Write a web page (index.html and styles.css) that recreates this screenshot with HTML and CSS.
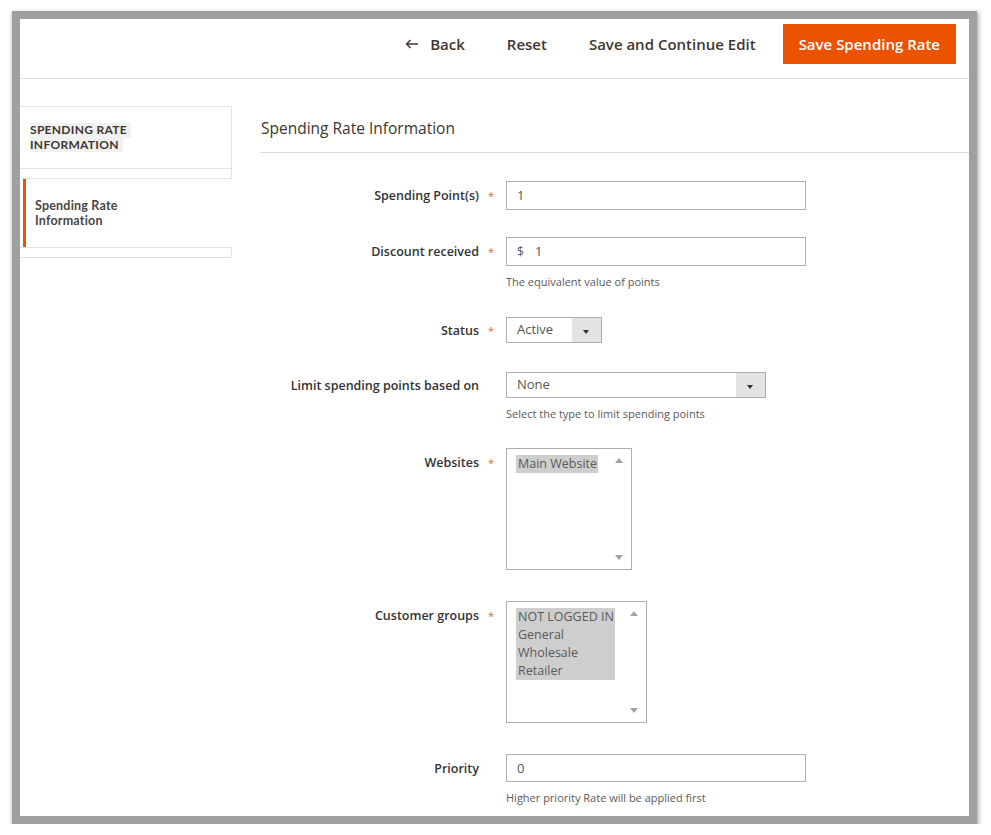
FILE: index.html
```html
<!DOCTYPE html>
<html lang="en">
<head>
<meta charset="utf-8">
<title>Spending Rate</title>
<link rel="stylesheet" href="styles.css">
</head>
<body>
<div class="frame">
  <header class="page-actions">
    <button class="btn btn-back" type="button">
      <svg class="back-icon" width="14" height="10" viewBox="0 0 14 10" aria-hidden="true"><path d="M13 5H1.5M5.5 1L1.5 5l4 4" fill="none" stroke="#41362f" stroke-width="1.4"/></svg>
      Back
    </button>
    <button class="btn" type="button">Reset</button>
    <button class="btn" type="button">Save and Continue Edit</button>
    <button class="btn btn-primary" type="button">Save Spending Rate</button>
  </header>
  <div class="content">
    <aside class="sidebar">
      <div class="side-title">
        <span class="side-title-line">SPENDING RATE</span>
        <span class="side-title-line">INFORMATION</span>
      </div>
      <div class="side-gap"></div>
      <div class="side-item">
        <span class="side-item-line">Spending Rate</span>
        <span class="side-item-line">Information</span>
      </div>
      <div class="side-bottom"></div>
    </aside>
    <main class="main">
      <h2 class="section-title">Spending Rate Information</h2>
      <form class="form">
        <div class="field">
          <label class="label">Spending Point(s)<span class="star">*</span></label>
          <div class="control"><div class="input input-wide">1</div></div>
        </div>
        <div class="field">
          <label class="label">Discount received<span class="star">*</span></label>
          <div class="control">
            <div class="input input-wide"><span class="prefix">$</span>1</div>
            <div class="note">The equivalent value of points</div>
          </div>
        </div>
        <div class="field field-select field-after-note">
          <label class="label">Status<span class="star">*</span></label>
          <div class="control">
            <div class="select select-status"><span class="select-value">Active</span><span class="select-arrow"></span></div>
          </div>
        </div>
        <div class="field field-select field-limit">
          <label class="label label-plain">Limit spending points based on</label>
          <div class="control">
            <div class="select select-limit"><span class="select-value">None</span><span class="select-arrow"></span></div>
            <div class="note">Select the type to limit spending points</div>
          </div>
        </div>
        <div class="field field-multi field-after-note-tight">
          <label class="label">Websites<span class="star">*</span></label>
          <div class="control">
            <div class="multi">
              <div class="options"><span class="option">Main Website</span></div>
              <div class="scroll"><span class="arrow-up"></span><span class="arrow-down"></span></div>
            </div>
          </div>
        </div>
        <div class="field field-multi field-loose">
          <label class="label">Customer groups<span class="star">*</span></label>
          <div class="control">
            <div class="multi">
              <div class="options">
                <span class="option">NOT LOGGED IN</span>
                <span class="option">General</span>
                <span class="option">Wholesale</span>
                <span class="option">Retailer</span>
              </div>
              <div class="scroll scroll-narrow"><span class="arrow-up"></span><span class="arrow-down"></span></div>
            </div>
          </div>
        </div>
        <div class="field field-loose">
          <label class="label label-plain">Priority</label>
          <div class="control">
            <div class="input input-wide input-short">0</div>
            <div class="note">Higher priority Rate will be applied first</div>
          </div>
        </div>
      </form>
    </main>
  </div>
</div>
</body>
</html>
```

FILE: styles.css
```css
* { box-sizing: border-box; }

html, body {
  margin: 0;
  padding: 0;
  background: #ffffff;
}

body {
  font-family: "Open Sans", "Noto Sans", "Liberation Sans", sans-serif;
  color: #303030;
}

.frame {
  margin: 11px 0 0 12px;
  width: 965px;
  height: 813px;
  border: 8px solid #a0a0a0;
  box-shadow: 1px 2px 4px 1px rgba(0, 0, 0, 0.3);
  background: #ffffff;
  overflow: hidden;
}

/* header actions */
.page-actions {
  height: 60px;
  display: flex;
  justify-content: flex-end;
  align-items: flex-start;
  gap: 12px;
  padding: 5px 13px 0 0;
  border-bottom: 1px solid #e3e3e3;
}

.btn {
  height: 40px;
  padding: 0 15px;
  border: 0;
  background: transparent;
  font-family: inherit;
  font-size: 15px;
  font-weight: 600;
  color: #41362f;
  display: flex;
  align-items: center;
  gap: 11px;
  cursor: pointer;
}

.btn-primary {
  background: #eb5202;
  color: #ffffff;
  border: 1px solid #eb5202;
}

.back-icon { display: block; }

/* layout */
.content {
  display: flex;
}

.sidebar {
  width: 212px;
  flex: none;
  margin-top: 27px;
}

.side-title {
  height: 63px;
  border-top: 1px solid #e3e3e3;
  border-right: 1px solid #e3e3e3;
  border-bottom: 1px solid #e3e3e3;
  padding-left: 10px;
  display: flex;
  flex-direction: column;
  justify-content: center;
  align-items: flex-start;
}

.side-title-line {
  display: block;
  height: 14.5px;
  font-family: Lato, "Open Sans", sans-serif;
  font-size: 12px;
  font-weight: 700;
  line-height: 14.5px;
  letter-spacing: 0.3px;
  color: #41362f;
  background: #f1f1f1;
  padding-right: 4px;
}

.side-gap {
  height: 10px;
  border-right: 1px solid #e3e3e3;
  border-bottom: 1px solid #e3e3e3;
}

.side-item {
  height: 68px;
  margin-left: 3px;
  border-left: 3px solid #eb5202;
  padding-left: 9px;
  display: flex;
  flex-direction: column;
  justify-content: center;
  align-items: flex-start;
}

.side-item-line {
  display: block;
  height: 15px;
  font-family: Lato, "Open Sans", sans-serif;
  font-size: 12.5px;
  font-weight: 700;
  line-height: 15px;
  letter-spacing: 0.2px;
  color: #4a4542;
}

.side-bottom {
  height: 11px;
  border: 1px solid #e3e3e3;
  border-left: 0;
}

.main {
  flex: 1;
  margin-left: 28px;
}

.section-title {
  margin: 39px 0 0 0;
  padding: 0 0 14px 1px;
  font-size: 15.5px;
  font-weight: 400;
  line-height: 20px;
  color: #41362f;
  border-bottom: 1px solid #dcdcdc;
}

/* form */
.form {
  display: flex;
  flex-direction: column;
  padding-top: 28px;
}

.field {
  display: flex;
  align-items: flex-start;
  margin-top: 27px;
}

.field:first-child { margin-top: 0; }
.field-after-note { margin-top: 27px; }
.field-limit { margin-top: 29px; }
.field-after-note-tight { margin-top: 26px; }
.field-loose { margin-top: 31px; }

.label {
  width: 246px;
  flex: none;
  text-align: right;
  padding-right: 12px;
  font-size: 12.5px;
  font-weight: 600;
  color: #333333;
  line-height: 29px;
}

.label-plain { padding-right: 27px; }

.star {
  display: inline-block;
  width: 15px;
  text-align: right;
  color: #e8643a;
  font-size: 11px;
  font-weight: 400;
}

.control {
  display: flex;
  flex-direction: column;
  align-items: flex-start;
}

.input {
  height: 29px;
  border: 1px solid #adadad;
  padding: 0 10px;
  font-size: 13px;
  line-height: 27px;
  color: #555555;
}

.input-wide { width: 300px; }
.input-short { height: 28px; line-height: 26px; }

.prefix {
  margin-right: 11px;
  font-size: 12px;
}

.note {
  margin-top: 8px;
  font-size: 11px;
  line-height: 16px;
  color: #5a5a5a;
}

.field-select .label {
  line-height: 26px;
  padding-top: 1px;
  height: 26px;
}

.select {
  height: 26px;
  border: 1px solid #adadad;
  display: flex;
  align-items: stretch;
  font-size: 13px;
  color: #555555;
}

.select-value {
  flex: 1;
  padding-left: 10px;
  line-height: 22px;
}

.select-arrow {
  width: 29px;
  background: #e3e3e3;
  position: relative;
}

.select-arrow::after {
  content: "";
  position: absolute;
  left: 11px;
  top: 12px;
  border-left: 3.5px solid transparent;
  border-right: 3.5px solid transparent;
  border-top: 4px solid #303030;
}

.select-status { width: 96px; }
.select-limit { width: 260px; }

.field-multi .label { line-height: 30px; }

.multi {
  height: 122px;
  border: 1px solid #adadad;
  display: flex;
}

.options {
  padding: 6px 0 0 9px;
  display: flex;
  flex-direction: column;
  align-items: stretch;
}

.option {
  display: block;
  background: #cecece;
  padding: 0 1px 0 2px;
  font-size: 12.5px;
  line-height: 18px;
  color: #5a5a5a;
}

.scroll {
  width: 24px;
  margin-left: 9px;
  display: flex;
  flex-direction: column;
  justify-content: space-between;
  align-items: center;
  padding: 9px 0 9px;
}

.scroll-narrow { margin-left: 7px; }

.arrow-up,
.arrow-down {
  width: 0;
  height: 0;
  border-left: 4.5px solid transparent;
  border-right: 4.5px solid transparent;
}

.arrow-up { border-bottom: 5px solid #a3a3a3; }
.arrow-down { border-top: 5px solid #a3a3a3; }
```
